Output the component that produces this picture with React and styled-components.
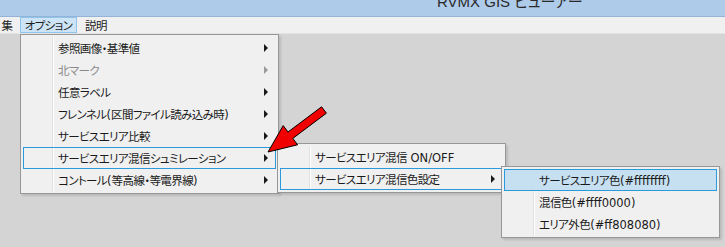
import styled, { createGlobalStyle } from "styled-components";

const Global = createGlobalStyle`
  html, body { margin: 0; padding: 0; }
  body {
    width: 725px;
    height: 247px;
    overflow: hidden;
    background: #d4d4d4;
    font-family: "Noto Sans CJK JP", "Liberation Sans", sans-serif;
    font-feature-settings: "palt";
  }
`;

const Window = styled.div`
  position: relative;
  width: 725px;
  height: 247px;
  display: flex;
  flex-direction: column;
`;

const TitleBar = styled.div`
  height: 16px;
  flex: none;
  background: #aecbe9;
  border-bottom: 1px solid #94b3d6;
  overflow: hidden;
  display: flex;
  padding-left: 437px;
`;

const Title = styled.span`
  font-family: "Liberation Sans", "Noto Sans CJK JP", sans-serif;
  font-size: 15px;
  line-height: 15px;
  margin-top: -6px;
  color: #2a2a2a;
  white-space: nowrap;
`;

const MenuBar = styled.div`
  height: 16px;
  flex: none;
  background: #f0f0f0;
  border-bottom: 1px solid #e3e3e3;
  display: flex;
  align-items: stretch;
  font-size: 11.5px;
  letter-spacing: -0.6px;
  color: #1e1e1e;
`;

const BarItem = styled.div`
  display: flex;
  align-items: center;
  justify-content: center;
  width: ${(p) => p.$w}px;
  margin-left: ${(p) => p.$ml || 0}px;
  box-sizing: border-box;
  background: ${(p) => (p.$open ? "#cce4f5" : "transparent")};
  border: 1px solid ${(p) => (p.$open ? "#8fc5ea" : "transparent")};
  white-space: nowrap;
`;

const Workspace = styled.div`
  flex: 1;
  background: #d4d4d4;
`;

const Popup = styled.div`
  position: absolute;
  left: ${(p) => p.$x}px;
  top: ${(p) => p.$y}px;
  width: ${(p) => p.$w}px;
  box-sizing: border-box;
  background: #f0f0f0;
  border: 1px solid #979797;
  padding: 2px;
  box-shadow: 2px 2px 2px rgba(0, 0, 0, 0.12);
  display: flex;
  flex-direction: column;
  &::before {
    content: "";
    position: absolute;
    left: 31px;
    top: 2px;
    bottom: 2px;
    width: 1px;
    background: #e0e0e0;
    box-shadow: 1px 0 0 #ffffff;
  }
`;

const Item = styled.div`
  position: relative;
  height: 22px;
  box-sizing: border-box;
  display: flex;
  align-items: center;
  padding-left: 34px;
  padding-right: 7px;
  font-size: 11.5px;
  letter-spacing: -0.6px;
  white-space: nowrap;
  color: ${(p) => (p.$disabled ? "#8a8a8a" : "#1a1a1a")};
  border: 1px solid ${(p) => (p.$hl ? "#2b9ada" : "transparent")};
  background: ${(p) => (p.$fill ? "#c6e0f1" : "transparent")};
`;

const Label = styled.span`
  flex: 1;
`;

const Latin = styled.span`
  font-family: "DejaVu Sans", "Liberation Sans", sans-serif;
  font-size: 11.5px;
  letter-spacing: 0;
`;

const Arrow = styled.span`
  width: 0;
  height: 0;
  border-left: 4px solid ${(p) => (p.$disabled ? "#9a9a9a" : "#1a1a1a")};
  border-top: 4px solid transparent;
  border-bottom: 4px solid transparent;
`;

const Overlay = styled.svg`
  position: absolute;
  left: 0;
  top: 0;
  pointer-events: none;
`;

const mainItems = [
  { t: "参照画像・基準値", sub: true },
  { t: "北マーク", sub: true, disabled: true },
  { t: "任意ラベル", sub: true },
  { t: "フレンネル(区間ファイル読み込み時)", sub: true },
  { t: "サービスエリア比較", sub: true },
  { t: "サービスエリア混信シュミレーション", sub: true, hl: true },
  { t: "コントール(等高線・等電界線)", sub: true },
];

const sub1 = [
  { t: "サービスエリア混信 ON/OFF" },
  { t: "サービスエリア混信色設定", sub: true, hl: true },
];

const sub2 = [
  { t: "サービスエリア色(#ffffffff)", hl: true, fill: true },
  { t: "混信色(#ffff0000)" },
  { t: "エリア外色(#ff808080)" },
];

// latin runs get their own wider face, like the Windows UI font
function Text({ children }) {
  return children
    .split(/([\x20-\x7e]+)/)
    .filter(Boolean)
    .map((part, i) =>
      /^[\x20-\x7e]+$/.test(part) ? <Latin key={i}>{part}</Latin> : part
    );
}

function Menu({ x, y, w, items }) {
  return (
    <Popup $x={x} $y={y} $w={w}>
      {items.map((it) => (
        <Item key={it.t} $hl={it.hl} $fill={it.fill} $disabled={it.disabled}>
          <Label>
            <Text>{it.t}</Text>
          </Label>
          {it.sub && <Arrow $disabled={it.disabled} />}
        </Item>
      ))}
    </Popup>
  );
}

export default function App() {
  return (
    <Window>
      <Global />
      <TitleBar>
        <Title>RVMX GIS ビューアー</Title>
      </TitleBar>
      <MenuBar>
        <BarItem $w={14}>集</BarItem>
        <BarItem $w={57} $ml={6} $open>オプション</BarItem>
        <BarItem $w={30} $ml={4}>説明</BarItem>
      </MenuBar>
      <Workspace />

      <Menu x={20} y={34} w={259} items={mainItems} />
      <Menu x={277} y={143} w={229} items={sub1} />
      <Menu x={501} y={166} w={219} items={sub2} />

      <Overlay width="725" height="247" viewBox="0 0 725 247">
        <polygon
          points="268,152 297.6,144.8 292.8,138.4 326.4,113.2 321.6,106.8 288,132 283.2,125.6"
          fill="#f00000"
          stroke="#000"
          strokeWidth="1"
          strokeLinejoin="miter"
        />
      </Overlay>
    </Window>
  );
}
